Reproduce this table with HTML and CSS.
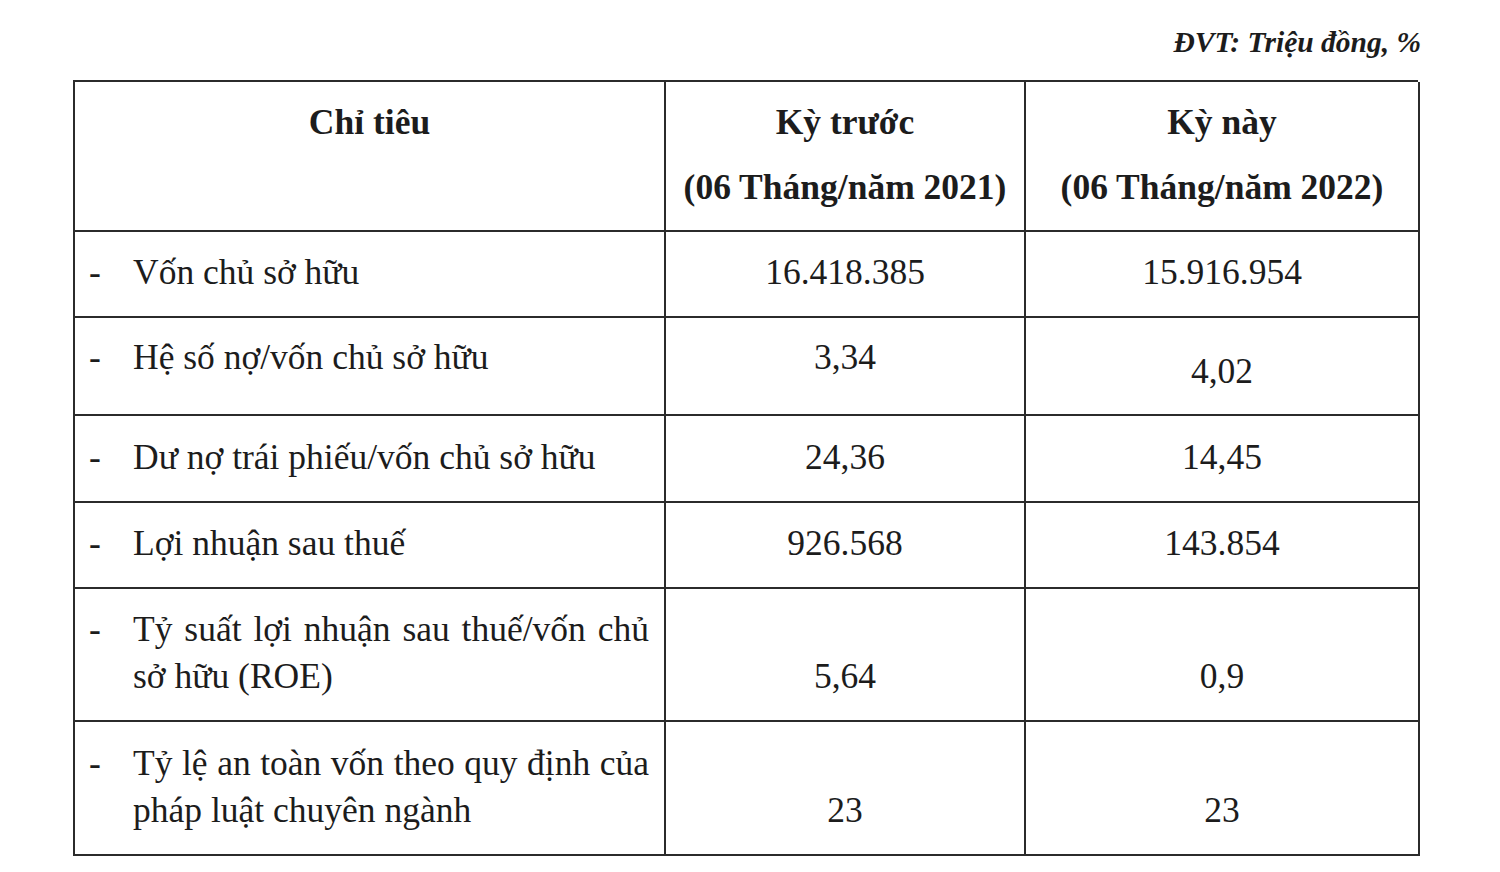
FILE: index.html
```html
<!DOCTYPE html>
<html lang="vi">
<head>
<meta charset="utf-8">
<link rel="stylesheet" href="styles.css">
</head>
<body>
<div class="page">
  <div class="unit">ĐVT: Triệu đồng, %</div>
  <div class="grid">
    <div class="cell head">Chỉ tiêu</div>
    <div class="cell head num">Kỳ trước<br>(06 Tháng/năm 2021)</div>
    <div class="cell head num">Kỳ này<br>(06 Tháng/năm 2022)</div>

    <div class="cell label"><div class="line"><span class="dash">-</span><span class="txt">Vốn chủ sở hữu</span></div></div>
    <div class="cell val">16.418.385</div>
    <div class="cell val">15.916.954</div>

    <div class="cell label up"><div class="line"><span class="dash">-</span><span class="txt">Hệ số nợ/vốn chủ sở hữu</span></div></div>
    <div class="cell val up">3,34</div>
    <div class="cell val down">4,02</div>

    <div class="cell label"><div class="line"><span class="dash">-</span><span class="txt">Dư nợ trái phiếu/vốn chủ sở hữu</span></div></div>
    <div class="cell val">24,36</div>
    <div class="cell val">14,45</div>

    <div class="cell label"><div class="line"><span class="dash">-</span><span class="txt">Lợi nhuận sau thuế</span></div></div>
    <div class="cell val">926.568</div>
    <div class="cell val">143.854</div>

    <div class="cell label"><div class="line"><span class="dash">-</span><span class="txt">Tỷ suất lợi nhuận sau thuế/vốn chủ sở hữu (ROE)</span></div></div>
    <div class="cell val second">5,64</div>
    <div class="cell val second">0,9</div>

    <div class="cell label"><div class="line"><span class="dash">-</span><span class="txt">Tỷ lệ an toàn vốn theo quy định của pháp luật chuyên ngành</span></div></div>
    <div class="cell val second">23</div>
    <div class="cell val second">23</div>
  </div>
</div>
</body>
</html>
```
FILE: styles.css
```css
html, body {
  margin: 0;
  padding: 0;
  background: #ffffff;
}
body {
  font-family: "Liberation Serif", "Times New Roman", serif;
  color: #1c1c1c;
}
.page {
  width: 1500px;
  height: 872px;
  box-sizing: border-box;
  padding-left: 73px;
  overflow: hidden;
}
.unit {
  height: 80px;
  box-sizing: border-box;
  padding-top: 24px;
  padding-right: 79px;
  text-align: right;
  font-weight: bold;
  font-style: italic;
  font-size: 29.5px;
  line-height: 36px;
}
.grid {
  width: 1345px;
  display: grid;
  grid-template-columns: 591px 360px 394px;
  grid-template-rows: 150px 86px 98px 87px 86px 133px 134px;
  border-top: 2px solid #2b2b2b;
  border-left: 2px solid #2b2b2b;
  box-sizing: border-box;
}
.cell {
  border-right: 2px solid #2b2b2b;
  border-bottom: 2px solid #2b2b2b;
  box-sizing: border-box;
  font-size: 35.5px;
  line-height: 47px;
  display: flex;
  align-items: center;
  padding-bottom: 3px;
}
.head {
  font-weight: bold;
  line-height: 65px;
  justify-content: center;
  align-items: flex-start;
  text-align: center;
  padding-top: 8px;
}
.label {
  padding-left: 14px;
  padding-right: 15px;
}
.line {
  display: flex;
  align-items: flex-start;
  width: 100%;
}
.dash {
  flex: 0 0 44px;
}
.txt {
  flex: 1;
  text-align: justify;
}
.val {
  justify-content: center;
}
.up {
  padding-bottom: 17px;
}
.down {
  padding-top: 13px;
}
.second {
  padding-top: 47px;
}
```
